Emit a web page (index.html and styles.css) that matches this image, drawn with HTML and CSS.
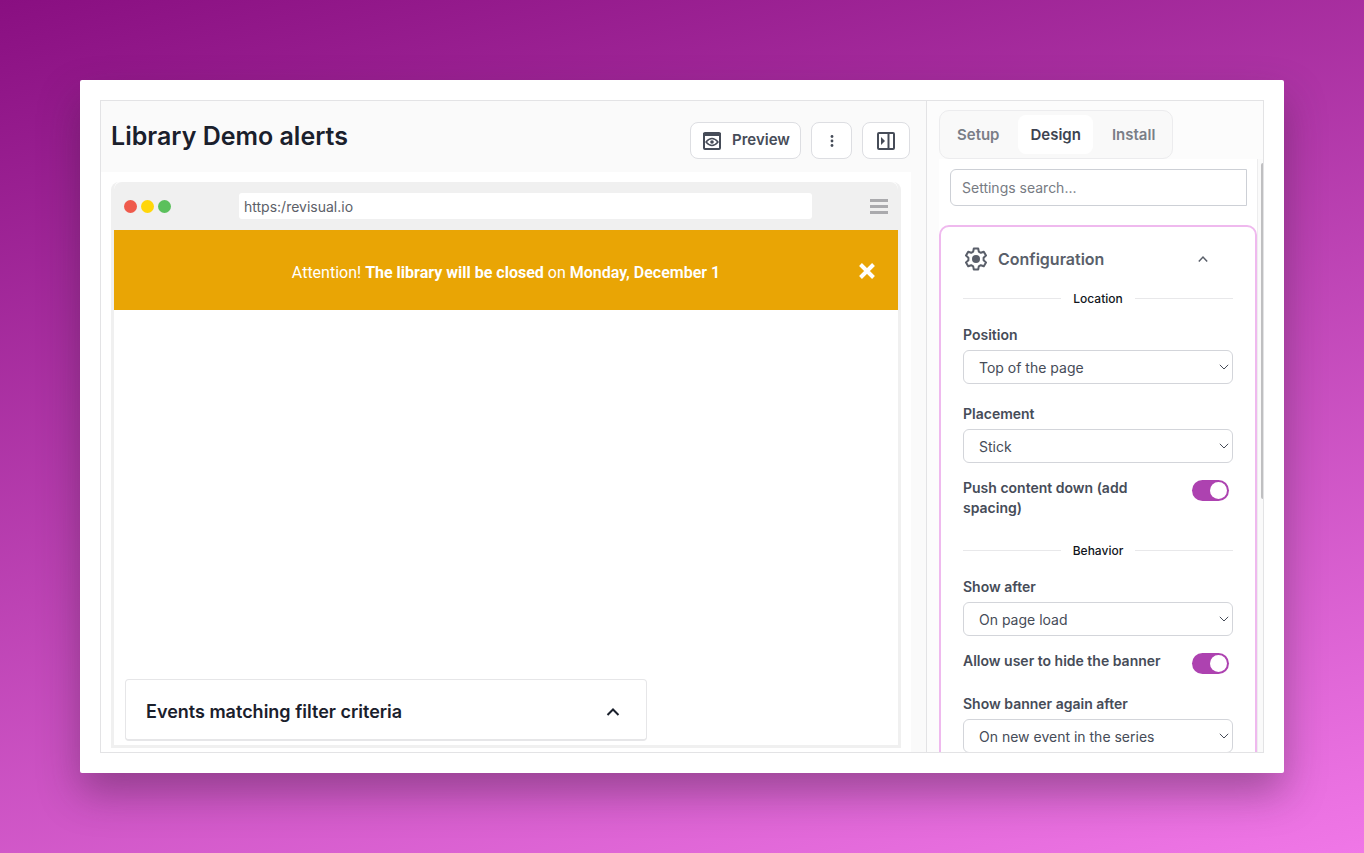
FILE: index.html
```html
<!DOCTYPE html>
<html lang="en">
  <head>
    <meta charset="UTF-8" />
    <meta name="viewport" content="width=device-width, initial-scale=1.0" />
    <title>Library Demo alerts</title>
    <link rel="stylesheet" href="styles.css">
  </head>
  <body>
    <div class="card">
      <div class="app">
        <main class="editor">
          <header class="toolbar">
            <h1>Library Demo alerts</h1>
            <button type="button" class="btn btn-preview">
              <svg width="20" height="20" viewBox="0 0 20 20">
                <rect x="2" y="2" width="16" height="16" rx="1" fill="none" stroke="currentColor" stroke-width="2" />
                <path d="M1 2h18v3H1z" fill="currentColor" />
                <path d="M4 11q6-7 12 0q-6 7-12 0z" fill="none" stroke="currentColor" stroke-width="1.4" />
                <circle cx="10" cy="11" r="1.8" fill="currentColor" />
              </svg>
              <span>Preview</span>
            </button>
            <button type="button" class="btn btn-more" aria-label="More">
              <svg width="14" height="14" viewBox="0 0 14 14" fill="currentColor">
                <circle cx="7" cy="2.500" r="1.4" />
                <circle cx="7" cy="7" r="1.4" />
                <circle cx="7" cy="11.500" r="1.4" />
              </svg>
            </button>
            <button type="button" class="btn btn-panel" aria-label="Toggle panel">
              <svg width="20" height="20" viewBox="0 0 20 20">
                <rect x="2" y="2" width="16" height="16" rx="1" fill="none" stroke="currentColor" stroke-width="2" />
                <path d="M12.500 2v16" stroke="currentColor" stroke-width="2" />
                <path d="M5 6l4 4-4 4z" fill="currentColor" />
              </svg>
            </button>
          </header>

          <div class="preview">
            <div class="browser">
              <div class="browser-bar">
                <div class="dots">
                  <span class="dot red"></span>
                  <span class="dot yellow"></span>
                  <span class="dot green"></span>
                </div>
                <input class="url" type="text" value="https:/revisual.io" aria-label="Address" />
                <div class="burger">
                  <span></span>
                  <span></span>
                  <span></span>
                </div>
              </div>

              <div class="banner">
                <p>Attention! <b>The library will be closed</b> on <b class="date">Monday, December 1</b></p>
                <button type="button" class="banner-close" aria-label="Close">
                  <svg width="18" height="18" viewBox="0 0 18 18">
                    <path d="M2.500 2.500l13 13M15.500 2.500l-13 13" stroke="currentColor" stroke-width="4" />
                  </svg>
                </button>
              </div>

              <section class="events">
                <h2>Events matching filter criteria</h2>
                <svg width="14" height="14" viewBox="0 0 14 14">
                  <path d="M1.500 10L7 4.500 12.500 10" fill="none" stroke="currentColor" stroke-width="2" />
                </svg>
              </section>
            </div>
          </div>
        </main>

        <aside class="sidebar">
          <nav class="tabs">
            <button type="button" class="tab">Setup</button>
            <button type="button" class="tab active">Design</button>
            <button type="button" class="tab">Install</button>
          </nav>

          <div class="settings">
            <div class="scroll">
              <input class="search" type="text" placeholder="Settings search..." aria-label="Settings search" />

              <section class="config">
                <div class="config-title">
                  <svg class="gear" width="24" height="24" viewBox="0 0 24 24">
                    <path d="M9.800 1.500h4.400l.6 3.100 2 1.200 3-1.100 2.200 3.900-2.400 2.100v2.600l2.400 2.100-2.200 3.900-3-1.100-2 1.200-.6 3.100H9.800l-.6-3.100-2-1.200-3 1.100L2 15.400l2.400-2.100v-2.600L2 8.600l2.200-3.900 3 1.100 2-1.200z" fill="none" stroke="currentColor" stroke-width="2" stroke-linejoin="round" />
                    <circle cx="12" cy="12" r="4" fill="currentColor" />
                  </svg>
                  <h3>Configuration</h3>
                  <svg width="10" height="10" viewBox="0 0 10 10">
                    <path d="M.8 7.500L5 3l4.200 4.500" fill="none" stroke="currentColor" stroke-width="1.500" />
                  </svg>
                </div>

                <div class="divider">Location</div>

                <div class="field">
                  <label for="position">Position</label>
                  <div class="select">
                    <select id="position">
                      <option>Top of the page</option>
                    </select>
                    <svg width="10" height="6" viewBox="0 0 10 6"><path d="M.8.8L5 5 9.200.8" fill="none" stroke="currentColor" /></svg>
                  </div>
                </div>

                <div class="field">
                  <label for="placement">Placement</label>
                  <div class="select">
                    <select id="placement">
                      <option>Stick</option>
                    </select>
                    <svg width="10" height="6" viewBox="0 0 10 6"><path d="M.8.8L5 5 9.200.8" fill="none" stroke="currentColor" /></svg>
                  </div>
                </div>

                <div class="switch-row">
                  <label for="push">Push content down (add spacing)</label>
                  <input type="checkbox" id="push" class="switch" checked />
                </div>

                <div class="divider">Behavior</div>

                <div class="field">
                  <label for="show-after">Show after</label>
                  <div class="select">
                    <select id="show-after">
                      <option>On page load</option>
                    </select>
                    <svg width="10" height="6" viewBox="0 0 10 6"><path d="M.8.8L5 5 9.200.8" fill="none" stroke="currentColor" /></svg>
                  </div>
                </div>

                <div class="switch-row">
                  <label for="hide">Allow user to hide the banner</label>
                  <input type="checkbox" id="hide" class="switch" checked />
                </div>

                <div class="field">
                  <label for="show-again">Show banner again after</label>
                  <div class="select">
                    <select id="show-again">
                      <option>On new event in the series</option>
                    </select>
                    <svg width="10" height="6" viewBox="0 0 10 6"><path d="M.8.8L5 5 9.200.8" fill="none" stroke="currentColor" /></svg>
                  </div>
                </div>
              </section>
            </div>
            <div class="scrollbar"><span class="thumb"></span></div>
          </div>
        </aside>
      </div>
    </div>
  </body>
</html>
```
FILE: styles.css
```css
* {
  box-sizing: border-box;
}

body {
  display: flex;
  height: 100vh;
  margin: 0;
  padding: 80px;
  font-family: Inter, "Liberation Sans", sans-serif;
  font-size: 14px;
  color: #464c58;
  background: linear-gradient(165deg, #890f81, #f077e7);
}

h1,
h2,
h3,
p {
  margin: 0;
}

button,
input,
select {
  font-family: inherit;
  font-size: inherit;
  color: inherit;
}

svg {
  display: block;
  flex: none;
}

/* White card holding the whole app */
.card {
  display: flex;
  flex: 1;
  min-width: 0;
  padding: 20px;
  border-radius: 2px;
  background: #fff;
  box-shadow: 0 20px 40px rgba(60, 30, 60, 0.4);
}

.app {
  display: flex;
  flex: 1;
  min-width: 0;
  border: 1px solid #e3e3e5;
  overflow: hidden;
}

/* Left side */
.editor {
  display: flex;
  flex: 1;
  flex-direction: column;
  min-width: 0;
  background: #fafafa;
}

.toolbar {
  display: flex;
  align-items: center;
  gap: 10px;
  height: 71px;
  padding: 8px 16px 0 10px;
}

.toolbar h1 {
  flex: 1;
  padding-bottom: 10px;
  font-size: 25px;
  font-weight: 600;
  line-height: 30px;
  color: #1a202c;
}

.btn {
  display: flex;
  align-items: center;
  justify-content: center;
  height: 37px;
  padding: 0;
  border: 1px solid #dddee2;
  border-radius: 8px;
  background: #fff;
  cursor: pointer;
}

.btn-preview {
  gap: 10px;
  width: 111px;
  padding-left: 1px;
  font-size: 15px;
  font-weight: 600;
}

.btn-preview span {
  padding-bottom: 3px;
}

.btn-more {
  width: 41px;
}

.btn-panel {
  width: 48px;
}

.preview {
  display: flex;
  flex: 1;
  margin-right: 15px;
  padding: 10px 10px 4px;
  background: #fff;
}

/* Fake browser window */
.browser {
  display: flex;
  flex: 1;
  flex-direction: column;
  min-width: 0;
  border: 3px solid #f0f0f0;
  border-top: 0;
  border-radius: 8px 8px 0 0;
}

.browser-bar {
  display: flex;
  align-items: center;
  height: 48px;
  padding: 0 10px;
  border-radius: 8px 8px 0 0;
  background: #f0f0f0;
}

.dots {
  display: flex;
  gap: 4px;
}

.dot {
  width: 13px;
  height: 13px;
  border-radius: 50%;
}

.red {
  background: #ef5a4c;
}

.yellow {
  background: #ffd60a;
}

.green {
  background: #5bc05c;
}

.url {
  flex: 1;
  min-width: 0;
  height: 26px;
  margin: 0 58px 0 68px;
  padding: 0 5px;
  border: 0;
  border-radius: 3px;
  color: #5c6068;
  background: #fff;
  outline: none;
}

.burger {
  display: flex;
  flex-direction: column;
  gap: 3px;
  width: 18px;
}

.burger span {
  height: 3px;
  background: #aaaaad;
}

.banner {
  position: relative;
  display: flex;
  align-items: center;
  justify-content: center;
  height: 80px;
  padding-top: 5px;
  font-family: Roboto, sans-serif;
  font-size: 16px;
  color: #fff;
  background: #e9a505;
}

.banner .date {
  font-weight: 600;
}

.banner-close {
  position: absolute;
  top: 32px;
  right: 22px;
  padding: 0;
  border: 0;
  background: none;
  cursor: pointer;
}

.events {
  display: flex;
  align-items: center;
  justify-content: space-between;
  width: 66.6%;
  height: 62px;
  margin: auto 0 4px 11px;
  padding: 4px 26px 0 20px;
  border: 1px solid #e6e6e8;
  border-bottom-width: 2px;
  border-radius: 4px;
  color: #1a202c;
}

.events h2 {
  font-size: 18px;
  font-weight: 600;
}

/* Right side */
.sidebar {
  display: flex;
  flex-direction: column;
  width: 337px;
  border-left: 1px solid #e3e3e5;
  padding-left: 12px;
  background: #fcfcfc;
}

.tabs {
  display: flex;
  align-self: flex-start;
  gap: 7px;
  margin-top: 9px;
  padding: 4px 5px;
  border: 1px solid #ececee;
  border-radius: 10px;
  background: #f9f9f9;
}

.tab {
  height: 39px;
  padding: 0 12px;
  border: 0;
  border-radius: 8px;
  font-size: 15px;
  font-weight: 600;
  color: #7a7e87;
  background: none;
  cursor: pointer;
}

.tab.active {
  color: #3d4350;
  background: #fff;
}

.settings {
  display: flex;
  flex: 1;
  min-height: 0;
}

.scroll {
  flex: 1;
  min-width: 0;
  padding-top: 10px;
  background: #fff;
  overflow: hidden;
}

.scrollbar {
  width: 6px;
  padding: 4px 0 0 3px;
  border-left: 1px solid #ededee;
  background: #fafafa;
}

.thumb {
  display: block;
  height: 57%;
  border-radius: 2px 0 0 2px;
  background: #bfbfc1;
}

.search {
  display: block;
  width: calc(100% - 21px);
  height: 37px;
  margin: 0 0 19px 11px;
  padding: 0 11px;
  border: 1px solid #cdd0d6;
  border-radius: 6px 0 0 6px;
  background: #fff;
}

.search::placeholder {
  color: #777b83;
}

.config {
  padding: 20px 22px;
  border: 2px solid #efb9ee;
  border-radius: 10px;
}

.config-title {
  display: flex;
  align-items: center;
  gap: 10px;
  height: 24px;
  padding: 0 25px 0 1px;
  color: #5a5f6a;
}

.config-title h3 {
  flex: 1;
  padding-bottom: 1px;
  font-size: 16px;
  font-weight: 600;
}

.divider {
  display: flex;
  align-items: center;
  gap: 12px;
  margin-top: 20px;
  font-size: 12px;
  font-weight: 500;
  line-height: 15px;
  color: #111520;
}

.switch-row + .divider {
  margin-top: 25px;
}

.divider::before,
.divider::after {
  content: "";
  flex: 1;
  height: 1px;
  background: #e8e8ea;
}

.field {
  margin: 20px 0 15px;
}

.divider + .field {
  margin-top: 19px;
}

.field label,
.switch-row label {
  display: block;
  font-weight: 600;
  line-height: 20px;
}

.select {
  position: relative;
  margin-top: 5px;
}

.select select {
  display: block;
  width: 100%;
  height: 34px;
  padding: 0 15px;
  border: 1px solid #d3d5da;
  border-radius: 6px;
  background: #fff;
  appearance: none;
}

.select svg {
  position: absolute;
  top: 14px;
  right: 4px;
  pointer-events: none;
}

.switch-row {
  display: flex;
  align-items: flex-start;
  justify-content: space-between;
  margin: 15px 4px 20px 0;
}

.switch-row label {
  max-width: 210px;
}

/* Toggle switch */
.switch {
  position: relative;
  flex: none;
  width: 37px;
  height: 21px;
  margin: 2px 0 0;
  border-radius: 11px;
  background: #ad42b0;
  appearance: none;
  cursor: pointer;
}

.switch::before {
  content: "";
  position: absolute;
  top: 2px;
  right: 2px;
  width: 17px;
  height: 17px;
  border-radius: 50%;
  background: #fff;
}
```
